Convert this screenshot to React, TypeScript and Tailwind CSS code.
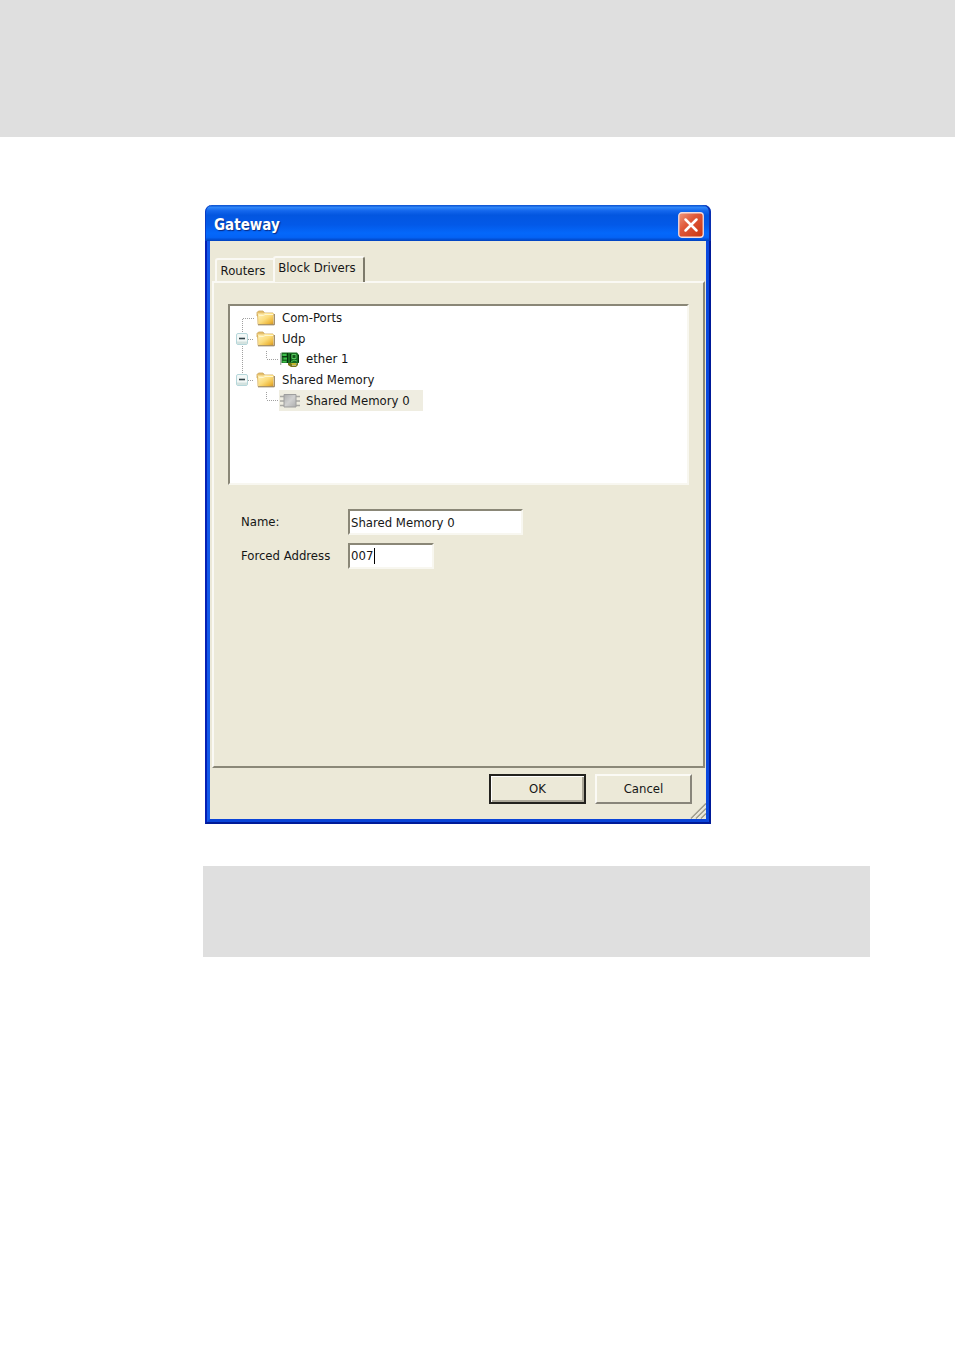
import { useState } from 'react'

const sunken =
  'border-2 border-t-[#8a8777] border-l-[#8a8777] border-r-[#f8f7f0] border-b-[#f8f7f0] bg-white'

function FolderIcon() {
  return (
    <svg width="20" height="18" viewBox="0 0 20 18" aria-hidden="true">
      <defs>
        <linearGradient id="folder" x1="0" y1="0" x2="1" y2="1">
          <stop offset="0" stopColor="#fff3c0" />
          <stop offset="0.5" stopColor="#fbdc7c" />
          <stop offset="0.8" stopColor="#eeb83c" />
          <stop offset="1" stopColor="#c98f2a" />
        </linearGradient>
      </defs>
      <path d="M1 3.5 2.5 2H7l1.5 2H17v3H1z" fill="#e8c06a" stroke="#c9a45a" strokeWidth="0.8" />
      <path d="M1.5 4.5H7l2-.5h8.500v11.500H2.500z" fill="url(#folder)" />
      <path d="M2 15.500 1.500 5" stroke="#d8ae58" strokeWidth="0.8" fill="none" />
      <path d="M2 15.800h16.300V5" stroke="#8a744c" strokeWidth="1" fill="none" />
      <path d="M3 6.500h4.500l1.500-1h8" stroke="#fff6cd" fill="none" />
    </svg>
  )
}

function NetworkCardIcon() {
  return (
    <svg width="20" height="16" viewBox="0 0 20 16" aria-hidden="true">
      <path d="M0.700 2v12" stroke="#a3aca3" strokeWidth="1.2" />
      <path d="M1.500 1.500H17l2 2.500v8h-2.500v2H9v-2H1.500z" fill="#176b20" />
      <path d="M2.500 3h4v2h-4zM3.500 6.500h4v2h-4zM2.500 10h4v1.500h-4z" fill="#3cc04a" />
      <path d="M7.500 2v10M10.500 3v8M2 5.700h5" stroke="#06330c" />
      <path d="M12 3.500h4v4h-4z" fill="#15571c" stroke="#5cd263" strokeWidth="0.9" />
      <path d="m11 11 3-2 3 1" stroke="#4bbd53" fill="none" />
      <path d="M8 12h3l1 2.500h4l1-2.500h1v2l-2 2h-5l-3-2z" fill="#77761a" />
      <path d="M11 12h5v2h-4z" fill="#c5b92e" />
      <path d="M18.500 4v7" stroke="#07390e" />
    </svg>
  )
}

function ChipIcon() {
  return (
    <svg width="20" height="16" viewBox="0 0 20 16" aria-hidden="true">
      <defs>
        <linearGradient id="chip" x1="0" y1="0" x2="1" y2="1">
          <stop offset="0" stopColor="#adadad" />
          <stop offset="0.5" stopColor="#d0d0d0" />
          <stop offset="1" stopColor="#aeaeae" />
        </linearGradient>
      </defs>
      <path
        d="M0 3.500h4M0 8h4M0 12.500h4M16 3.500h4M16 8h4M16 12.500h4"
        stroke="#a9a8a4"
        strokeWidth="1.4"
      />
      <path d="M4 1.500h12v12.500H4z" fill="url(#chip)" stroke="#9e9e9e" />
    </svg>
  )
}

function Expander() {
  return (
    <button aria-label="Collapse" className="w-3 h-3 ml-[6px] mr-[8px]">
      <svg width="12" height="12" viewBox="0 0 12 12" className="block">
        <rect x="0.5" y="0.5" width="11" height="11" rx="1.5" fill="#f3f8f7" stroke="#b5d6da" />
        <path d="M1 8.500h10V11H1z" fill="#d3e2df" />
        <path d="M3 5.500h6" stroke="#33444a" strokeWidth="1.6" />
      </svg>
    </button>
  )
}

function TreeLines() {
  return (
    <svg
      width="60"
      height="103"
      className="absolute left-0 top-[2px] pointer-events-none"
      aria-hidden="true"
      stroke="#a0a0a0"
      strokeDasharray="1 1"
      fill="none"
    >
      <path d="M12.500 11v14M12.500 38v28" />
      <path d="M13 10.500h11M18 31.500h6M18 72.500h6" />
      <path d="M36.500 43v8M37 51.500h11M36.500 84v8M37 92.500h11" />
    </svg>
  )
}

function FolderRow({ label, expandable }: { label: string; expandable?: boolean }) {
  return (
    <li className="flex flex-1 items-center">
      {expandable ? <Expander /> : <span className="w-[26px]" />}
      <FolderIcon />
      <span className="ml-[6px]">{label}</span>
    </li>
  )
}

function Tree() {
  return (
    <div className={`relative h-[181px] pt-[2px] ${sunken}`}>
      <TreeLines />
      <ul className="relative flex flex-col h-[103px]">
        <FolderRow label="Com-Ports" />
        <FolderRow label="Udp" expandable />
        <li className="flex flex-1 items-center pl-[50px]">
          <NetworkCardIcon />
          <span className="ml-[6px]">ether 1</span>
        </li>
        <FolderRow label="Shared Memory" expandable />
        <li className="flex flex-1 items-center pl-[49px]">
          <span className="flex self-stretch items-center w-[144px] pl-px bg-[#efede1]">
            <ChipIcon />
            <span className="ml-[6px]">Shared Memory 0</span>
          </span>
        </li>
      </ul>
    </div>
  )
}

function TitleBar() {
  return (
    <header className="flex items-center justify-between h-9 pl-[9px] pr-[7px] pt-1 rounded-t-[7px] bg-[linear-gradient(180deg,#0a50cf_0%,#2f86f8_7%,#1467ed_16%,#0356e0_28%,#0359e8_55%,#0468fb_78%,#0463f5_90%,#0141bd_100%)] shadow-[inset_1px_0_0_#0a3cc4,inset_-2px_0_0_#0a2fb0]">
      <h1 className="text-[15px] leading-5 font-bold text-white [text-shadow:1px_1px_1px_#0a2a80]">
        Gateway
      </h1>
      <button aria-label="Close" className="rounded-[4px]">
        <svg width="26" height="26" viewBox="0 0 26 26" className="block">
          <defs>
            <linearGradient id="close" x1="0" y1="0" x2="1" y2="1">
              <stop offset="0" stopColor="#ef9a80" />
              <stop offset="0.4" stopColor="#e0583a" />
              <stop offset="1" stopColor="#c8340d" />
            </linearGradient>
          </defs>
          <rect x="0.75" y="0.75" width="24.500" height="24.500" rx="3" fill="url(#close)" stroke="#f3dcde" strokeWidth="1.3" />
          <path d="m7.500 7.500 11 11m0-11-11 11" stroke="#fff" strokeWidth="2.5" strokeLinecap="round" />
        </svg>
      </button>
    </header>
  )
}

export default function App() {
  const [name, setName] = useState('Shared Memory 0')
  const [address, setAddress] = useState('007')

  return (
    <div className="min-h-screen bg-white">
      <div className="h-[137px] bg-[#dfdfdf]" />
      <main className="pl-[203px] pr-[85px] pt-[68px]">
        <section className="ml-[2px] max-w-[506px] font-['DejaVu_Sans_Condensed','Noto_Sans',sans-serif] text-[13px] leading-4 text-[#161616]">
          <TitleBar />
          <div className="border-x-2 border-b-2 border-l-[#0520b4] border-r-[#001a98] border-b-[#001a98]">
            <div className="border-x-[3px] border-b-[3px] border-l-[#1358ea] border-r-[#0a48de] border-b-[#0a44d8]">
              <div className="pt-[15px] pl-[2px] pr-px bg-[#ece9d8]">
                <div role="tablist" className="relative flex items-end pl-[3px] -mb-px">
                  <button
                    role="tab"
                    aria-selected="false"
                    className="w-[58px] h-[23px] pr-1 mb-px rounded-tl-[3px] border-t-2 border-l-2 border-[#faf9f4]"
                  >
                    Routers
                  </button>
                  <button
                    role="tab"
                    aria-selected="true"
                    className="w-[92px] h-[26px] pb-1 pr-1 rounded-t-[3px] border-t-2 border-l-2 border-r-2 border-t-[#faf9f4] border-l-[#faf9f4] border-r-[#7d7a6b] bg-[#ece9d8] whitespace-nowrap"
                  >
                    Block Drivers
                  </button>
                </div>
                <div
                  role="tabpanel"
                  className="h-[487px] px-[14px] pt-[21px] border-2 border-t-[#faf9f4] border-l-[#faf9f4] border-r-[#8b8878] border-b-[#8b8878]"
                >
                  <Tree />
                  <form className="grid grid-cols-[107px_1fr] items-center gap-y-2 pt-6 pl-[13px]">
                    <label htmlFor="name">Name:</label>
                    <input
                      id="name"
                      value={name}
                      onChange={(e) => setName(e.target.value)}
                      className={`w-[175px] h-[26px] pl-px outline-none ${sunken}`}
                    />
                    <label htmlFor="address">Forced Address</label>
                    <div className={`flex items-center w-[86px] h-[26px] pl-px ${sunken}`}>
                      <input
                        id="address"
                        value={address}
                        onChange={(e) => setAddress(e.target.value)}
                        className="w-[23px] outline-none"
                      />
                      <span className="w-px h-4 bg-black" />
                    </div>
                  </form>
                </div>
                <footer className="relative flex justify-end gap-[9px] pt-[6px] pb-[15px] pr-[13px]">
                  <button className="w-[97px] h-[30px] border-2 border-[#23221e] shadow-[inset_1px_1px_0_#fff,inset_-2px_-2px_0_#aca899]">
                    OK
                  </button>
                  <button className="w-[97px] h-[30px] border-2 border-t-[#fbfaf5] border-l-[#fbfaf5] border-r-[#88857a] border-b-[#88857a]">
                    Cancel
                  </button>
                  <svg
                    width="16"
                    height="16"
                    viewBox="0 0 16 16"
                    className="absolute -right-px bottom-0"
                    aria-hidden="true"
                  >
                    <path d="M2 16 16 2M7 16l9-9M12 16l4-4" stroke="#faf9f4" />
                    <path d="M1 15.500 16 .5M6 15.500l10-10M11 15.500l5-5" stroke="#a19e8f" strokeWidth="1.6" />
                  </svg>
                </footer>
              </div>
            </div>
          </div>
        </section>
        <div className="mt-[42px] h-[91px] bg-[#dfdfdf]" />
      </main>
    </div>
  )
}
